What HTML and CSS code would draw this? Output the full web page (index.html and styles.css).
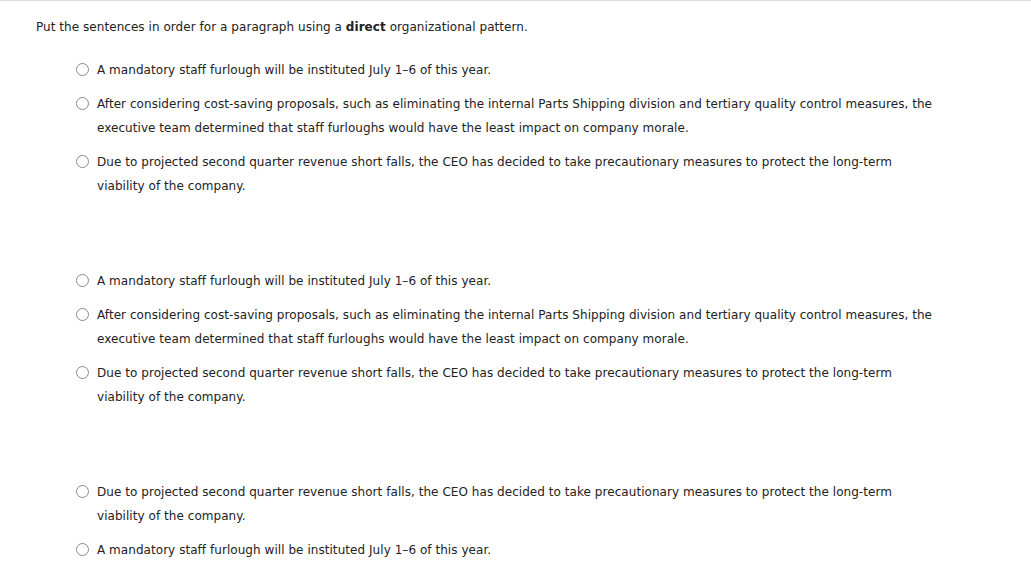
FILE: index.html
```html
<!DOCTYPE html>
<html lang="en">
<head>
<meta charset="utf-8">
<title>Order the sentences</title>
<link rel="stylesheet" href="styles.css">
</head>
<body>
<div class="page">
  <p class="prompt">Put the sentences in order for a paragraph using a <b>direct</b> organizational pattern.</p>

  <div class="group">
    <label class="option"><span class="radio"></span><span class="text">A mandatory staff furlough will be instituted July 1–6 of this year.</span></label>
    <label class="option"><span class="radio"></span><span class="text">After considering cost-saving proposals, such as eliminating the internal Parts Shipping division and tertiary quality control measures, the executive team determined that staff furloughs would have the least impact on company morale.</span></label>
    <label class="option"><span class="radio"></span><span class="text">Due to projected second quarter revenue short falls, the CEO has decided to take precautionary measures to protect the long-term viability of the company.</span></label>
  </div>

  <div class="group">
    <label class="option"><span class="radio"></span><span class="text">A mandatory staff furlough will be instituted July 1–6 of this year.</span></label>
    <label class="option"><span class="radio"></span><span class="text">After considering cost-saving proposals, such as eliminating the internal Parts Shipping division and tertiary quality control measures, the executive team determined that staff furloughs would have the least impact on company morale.</span></label>
    <label class="option"><span class="radio"></span><span class="text">Due to projected second quarter revenue short falls, the CEO has decided to take precautionary measures to protect the long-term viability of the company.</span></label>
  </div>

  <div class="group">
    <label class="option"><span class="radio"></span><span class="text">Due to projected second quarter revenue short falls, the CEO has decided to take precautionary measures to protect the long-term viability of the company.</span></label>
    <label class="option"><span class="radio"></span><span class="text">A mandatory staff furlough will be instituted July 1–6 of this year.</span></label>
    <label class="option"><span class="radio"></span><span class="text">After considering cost-saving proposals, such as eliminating the internal Parts Shipping division and tertiary quality control measures, the executive team determined that staff furloughs would have the least impact on company morale.</span></label>
  </div>
</div>
</body>
</html>
```
FILE: styles.css
```css
html, body {
  margin: 0;
  padding: 0;
  background: #fff;
}
body {
  font-family: "DejaVu Sans", Verdana, sans-serif;
  font-size: 12px;
  line-height: 24px;
  letter-spacing: 0.05px;
  color: #222;
}
.page {
  border-top: 1px solid #dcdcdc;
  padding: 14px 36px 0 36px;
}
.prompt {
  margin: 0 0 19px 0;
}
.group {
  display: flex;
  flex-direction: column;
  gap: 10px;
  padding-left: 40px;
  margin-bottom: 71px;
}
.option {
  display: flex;
  align-items: flex-start;
  gap: 8px;
  width: 861px;
}
.radio {
  flex: none;
  width: 11px;
  height: 11px;
  margin-top: 5px;
  border: 1px solid #8a8a8a;
  border-radius: 50%;
  background: #fff;
}
.text {
  flex: 1;
}
```
